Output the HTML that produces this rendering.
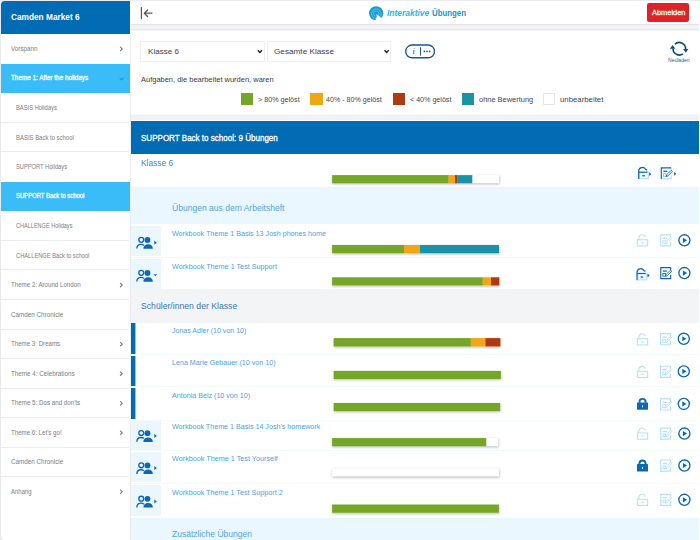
<!DOCTYPE html><html lang="de"><head><meta charset="utf-8"><title>Interaktive Übungen</title><style>

html,body{margin:0;padding:0}
body{width:700px;height:540px;position:relative;overflow:hidden;background:#fff;font-family:"Liberation Sans", sans-serif}
.b{position:absolute;display:block}
.t{position:absolute;white-space:nowrap;line-height:12px;height:12px;transform-origin:0 50%}

</style></head><body>
<svg class="b" width="0" height="0" style="left:0;top:0"><defs><filter id="bl" x="-5%" y="-60%" width="110%" height="220%"><feGaussianBlur stdDeviation="0.95"/></filter></defs></svg>
<div class="b" style="left:0.00px;top:0.00px;width:700.00px;height:1.00px;background:#ebecef;"></div>
<div class="b" style="left:0.00px;top:0.00px;width:6.00px;height:6.00px;background:#e6e7ea;"></div>
<div class="b" style="left:0.00px;top:534.00px;width:6.00px;height:6.00px;background:#e6e7ea;"></div>
<div class="b" style="left:0.00px;top:0.00px;width:1.20px;height:540.00px;background:#e9eaee;"></div>
<div class="b" style="left:1.00px;top:1.00px;width:129.00px;height:539.00px;background:#fff;border-radius:4px 0 0 4px"></div>
<div class="b" style="left:1.00px;top:1.00px;width:128.70px;height:32.70px;background:#016cb3;border-radius:4px 0 0 0"></div>
<div class="b" style="left:129.50px;top:33.70px;width:1.00px;height:506.30px;background:#edeef1;"></div>
<div class="b" style="left:1.00px;top:63.92px;width:128.70px;height:28.92px;background:#39bcf7;"></div>
<div class="b" style="left:1.00px;top:121.86px;width:127.50px;height:1.00px;background:#ededee;"></div>
<div class="b" style="left:1.00px;top:151.38px;width:127.50px;height:1.00px;background:#ededee;"></div>
<div class="b" style="left:1.00px;top:182.00px;width:128.70px;height:28.92px;background:#39bcf7;"></div>
<div class="b" style="left:1.00px;top:239.94px;width:127.50px;height:1.00px;background:#ededee;"></div>
<div class="b" style="left:1.00px;top:269.46px;width:127.50px;height:1.00px;background:#ededee;"></div>
<div class="b" style="left:1.00px;top:298.98px;width:127.50px;height:1.00px;background:#ededee;"></div>
<div class="b" style="left:1.00px;top:328.50px;width:127.50px;height:1.00px;background:#ededee;"></div>
<div class="b" style="left:1.00px;top:358.02px;width:127.50px;height:1.00px;background:#ededee;"></div>
<div class="b" style="left:1.00px;top:387.54px;width:127.50px;height:1.00px;background:#ededee;"></div>
<div class="b" style="left:1.00px;top:417.06px;width:127.50px;height:1.00px;background:#ededee;"></div>
<div class="b" style="left:1.00px;top:446.58px;width:127.50px;height:1.00px;background:#ededee;"></div>
<div class="b" style="left:1.00px;top:476.10px;width:127.50px;height:1.00px;background:#ededee;"></div>
<div class="b" style="left:131.00px;top:24.00px;width:567.70px;height:1.00px;background:#e3e4eb;"></div>
<div class="b" style="left:131.00px;top:25.00px;width:567.70px;height:4.00px;background:#f2f2f7;"></div>
<div class="b" style="left:131.00px;top:29.00px;width:567.70px;height:1.00px;background:#e6e6ed;"></div>
<div class="b" style="left:131.00px;top:30.00px;width:567.70px;height:1.00px;background:#f5f5f9;"></div>
<div class="b" style="left:647.40px;top:3.40px;width:41.70px;height:18.30px;background:#e02228;border-radius:2px"></div>
<div class="b" style="left:131.00px;top:114.00px;width:567.70px;height:1.00px;background:#f8f8fa;"></div>
<div class="b" style="left:131.00px;top:115.00px;width:567.70px;height:5.00px;background:#f1f2f5;"></div>
<div class="b" style="left:140.00px;top:41.00px;width:124.60px;height:21.00px;background:#fff;box-sizing:border-box;border:1px solid #efeff2"></div>
<div class="b" style="left:267.10px;top:41.00px;width:123.70px;height:21.00px;background:#fff;box-sizing:border-box;border:1px solid #efeff2"></div>
<div class="b" style="left:241.00px;top:93.20px;width:12.30px;height:11.60px;background:#76a628;"></div>
<div class="b" style="left:310.30px;top:93.20px;width:12.30px;height:11.60px;background:#f0a716;"></div>
<div class="b" style="left:392.90px;top:93.20px;width:12.30px;height:11.60px;background:#ae3a0d;"></div>
<div class="b" style="left:462.10px;top:93.20px;width:12.30px;height:11.60px;background:#1b93a7;"></div>
<div class="b" style="left:543.10px;top:93.20px;width:12.30px;height:11.60px;background:#fff;box-sizing:border-box;border:1px solid #e4e4e6"></div>
<div class="b" style="left:131.00px;top:121.00px;width:567.70px;height:33.00px;background:#016cb3;"></div>
<div class="b" style="left:131.00px;top:187.00px;width:567.70px;height:1.00px;background:#f0f1f3;"></div>
<div class="b" style="left:131.00px;top:188.00px;width:567.70px;height:36.30px;background:#ebf7fe;"></div>
<div class="b" style="left:131.00px;top:289.00px;width:567.70px;height:34.00px;background:#f3f4f6;"></div>
<div class="b" style="left:131.00px;top:517.60px;width:567.70px;height:22.40px;background:#ebf7fe;"></div>
<div class="b" style="left:131.00px;top:226.10px;width:29.70px;height:30.30px;background:#ebf6fd;"></div>
<div class="b" style="left:131.00px;top:258.60px;width:29.70px;height:30.00px;background:#ebf6fd;"></div>
<div class="b" style="left:131.00px;top:421.10px;width:29.70px;height:28.50px;background:#ebf6fd;"></div>
<div class="b" style="left:131.00px;top:451.60px;width:29.70px;height:30.00px;background:#ebf6fd;"></div>
<div class="b" style="left:131.00px;top:485.10px;width:29.70px;height:30.50px;background:#ebf6fd;"></div>
<div class="b" style="left:131.00px;top:257.10px;width:567.70px;height:1.00px;background:#f3f9fd;"></div>
<div class="b" style="left:131.00px;top:449.90px;width:567.70px;height:1.00px;background:#f3f9fd;"></div>
<div class="b" style="left:131.00px;top:482.60px;width:567.70px;height:1.00px;background:#f3f9fd;"></div>
<div class="b" style="left:131.00px;top:323.10px;width:5.00px;height:30.60px;background:linear-gradient(90deg,#016cb3 4px,rgba(1,108,179,.42) 4px);"></div>
<div class="b" style="left:131.00px;top:355.60px;width:5.00px;height:30.30px;background:linear-gradient(90deg,#016cb3 4px,rgba(1,108,179,.42) 4px);"></div>
<div class="b" style="left:131.00px;top:387.80px;width:5.00px;height:31.40px;background:linear-gradient(90deg,#016cb3 4px,rgba(1,108,179,.42) 4px);"></div>
<div class="b" style="left:131.00px;top:354.20px;width:567.70px;height:1.00px;background:#f3f9fd;"></div>
<div class="b" style="left:131.00px;top:386.40px;width:567.70px;height:1.00px;background:#f3f9fd;"></div>
<div class="b" style="left:131.00px;top:419.80px;width:567.70px;height:1.00px;background:#f3f9fd;"></div>
<svg class="b" style="left:119px;top:45px" width="5" height="7" viewBox="-0.400 -0.960 5.000 7.000"><path d="M0.7 0.9 L2.8 3 L0.7 5.1" fill="none" stroke="#7d8085" stroke-width="1.15"/></svg>
<svg class="b" style="left:118px;top:77px" width="7" height="4" viewBox="-0.900 -0.180 7.000 4.000"><path d="M0.8 0.7 L2.7 2.6 L4.6 0.7" fill="none" stroke="#2a93ce" stroke-width="1.1"/></svg>
<svg class="b" style="left:119px;top:282px" width="5" height="7" viewBox="-0.400 -0.120 5.000 7.000"><path d="M0.7 0.9 L2.8 3 L0.7 5.1" fill="none" stroke="#7d8085" stroke-width="1.15"/></svg>
<svg class="b" style="left:119px;top:341px" width="5" height="7" viewBox="-0.400 -0.160 5.000 7.000"><path d="M0.7 0.9 L2.8 3 L0.7 5.1" fill="none" stroke="#7d8085" stroke-width="1.15"/></svg>
<svg class="b" style="left:119px;top:370px" width="5" height="7" viewBox="-0.400 -0.680 5.000 7.000"><path d="M0.7 0.9 L2.8 3 L0.7 5.1" fill="none" stroke="#7d8085" stroke-width="1.15"/></svg>
<svg class="b" style="left:119px;top:400px" width="5" height="7" viewBox="-0.400 -0.200 5.000 7.000"><path d="M0.7 0.9 L2.8 3 L0.7 5.1" fill="none" stroke="#7d8085" stroke-width="1.15"/></svg>
<svg class="b" style="left:119px;top:429px" width="5" height="7" viewBox="-0.400 -0.720 5.000 7.000"><path d="M0.7 0.9 L2.8 3 L0.7 5.1" fill="none" stroke="#7d8085" stroke-width="1.15"/></svg>
<svg class="b" style="left:119px;top:488px" width="5" height="7" viewBox="-0.400 -0.760 5.000 7.000"><path d="M0.7 0.9 L2.8 3 L0.7 5.1" fill="none" stroke="#7d8085" stroke-width="1.15"/></svg>
<svg class="b" style="left:140px;top:6px" width="14" height="14" viewBox="0.000 -0.500 14.000 14.000"><g fill="none" stroke="#58585a" stroke-width="1.25" stroke-linecap="round" stroke-linejoin="round"><path d="M1.4 1.1V12"/><path d="M4.3 6.7H11.9M7.6 3.5L4.3 6.7L7.6 10"/></g></svg>
<svg class="b" style="left:368px;top:5px" width="16" height="16" viewBox="-0.450 -0.550 16.000 16.000"><circle cx="7.7" cy="7.7" r="7.05" fill="#149ad2"/><g fill="none" stroke="#6ac5ec" stroke-width="0.9"><circle cx="7.8" cy="8.2" r="2.7"/><circle cx="7.8" cy="8.2" r="4.8"/></g><path d="M7.9 8.3 L15.2 14.6 L10 17.4 L6.9 17.4 Z" fill="#fff"/><path d="M7.2 8.2 L8 8 L8.3 11.6 L7 13 Z" fill="#149ad2"/></svg>
<svg class="b" style="left:256px;top:49px" width="7" height="5" viewBox="-0.900 -0.400 7.000 5.000"><path d="M0.9 0.9 L3 3.1 L5.1 0.9" fill="none" stroke="#222" stroke-width="1.4"/></svg>
<svg class="b" style="left:383px;top:49px" width="7" height="5" viewBox="-0.600 -0.400 7.000 5.000"><path d="M0.9 0.9 L3 3.1 L5.1 0.9" fill="none" stroke="#222" stroke-width="1.4"/></svg>
<svg class="b" style="left:404px;top:43px" width="32" height="17" viewBox="-0.400 -0.700 32.000 17.000"><rect x="1.3" y="1.3" width="28.8" height="12.8" rx="6.4" fill="#fff" stroke="#1c568c" stroke-width="1.4"/><path d="M16.1 3.6V12" stroke="#1c568c" stroke-width="1"/><circle cx="20" cy="7.7" r="0.85" fill="#1c568c"/><circle cx="22.6" cy="7.7" r="0.85" fill="#1c568c"/><circle cx="25.2" cy="7.7" r="0.85" fill="#1c568c"/><text x="8" y="10.5" font-family="Liberation Serif, serif" font-style="italic" font-size="8.6" fill="#1c4f80">i</text></svg>
<svg class="b" style="left:669px;top:40px" width="21" height="17" viewBox="0.000 0.000 21.000 17.000"><g fill="none" stroke="#0f4a7e" stroke-width="1.6"><path d="M5.85 4.25A6.3 6.3 0 0 1 16.6 8.9"/><path d="M4.0 8.6A6.3 6.3 0 0 0 14.0 13.8"/></g><path d="M14.1 9.0 L19.3 9.0 L16.9 12.8 Z" fill="#0f4a7e"/><path d="M0.8 8.7 L6.2 8.7 L3.6 5.0 Z" fill="#0f4a7e"/></svg>
<svg class="b" style="left:329px;top:172px" width="174" height="15" viewBox="-0.100 -0.100 174.000 15.000"><rect x="3.3" y="3.9" width="167.00" height="8.20" fill="#28323c" fill-opacity="0.36" filter="url(#bl)"/><rect x="3" y="3" width="167.00" height="8.20" fill="#fff"/><rect x="3.00" y="3" width="116.70" height="8.20" fill="#76a628"/><rect x="119.40" y="3" width="6.80" height="8.20" fill="#f0a716"/><rect x="125.90" y="3" width="2.50" height="8.20" fill="#ae3a0d"/><rect x="128.10" y="3" width="15.10" height="8.20" fill="#1b93a7"/></svg>
<svg class="b" style="left:636px;top:166px" width="16" height="15" viewBox="-7.000 -7.300 16.000 15.000"><rect x="-3.4" y="-1.25" width="8.8" height="6.5" fill="#f4fbff" stroke="#b4e1fb" stroke-width="1.1"/><g fill="none" stroke="#0a69b2" stroke-width="1.2"><path d="M-4.3 5.7V-2A3.7 3.7 0 0 1 2.6 -4L4.1 -3.2"/><path d="M-4.3 -1.1H4.4"/><path d="M-0.7 2.45H1.9" stroke-width="1.3"/></g><path d="M6.2 -1 L8.4 0.9 L6.2 2.8 Z" fill="#0a69b2"/></svg>
<svg class="b" style="left:660px;top:167px" width="17" height="13" viewBox="-0.500 0.000 17.000 13.000"><g fill="none" stroke="#0a69b2" stroke-width="1.15"><path d="M10.7 0.8V3.2M10.7 8.2V11.9H0.8" stroke="#b4e1fb"/><path d="M0.8 11.9V0.8H10.7" stroke="#0a69b2"/><path d="M2.9 4.3H6.9" stroke-width="1.3"/><rect x="2.9" y="6.7" width="2.6" height="2.6" stroke-width="0.9" stroke="#7fc4f0"/><path d="M5.6 9.6L6.4 7.6L10.6 3.3L11.8 4.4L7.6 8.8Z" stroke-width="0.9" fill="#fff"/></g><path d="M13.6 4.9 L15.8 6.8 L13.6 8.7 Z" fill="#0a69b2"/></svg>
<svg class="b" style="left:136px;top:236px" width="23" height="13" viewBox="-0.100 -0.700 23.000 13.000"><g fill="none" stroke="#0a69b2" stroke-width="1.35"><circle cx="5.15" cy="3.15" r="2.45"/><path d="M0.75 11.9C0.8 9.1 2.5 7.6 4.9 7.6C6 7.6 7 7.9 7.8 8.7"/></g><circle cx="11.4" cy="3.3" r="2.9" fill="#0a69b2"/><path d="M7.3 12C7.3 9.2 9 7.5 12 7.5C15 7.5 16.7 9.2 16.7 12Z" fill="#0a69b2"/><path d="M18.2 3.9 L20.7 6 L18.2 8.1 Z" fill="#0a69b2"/></svg>
<svg class="b" style="left:329px;top:242px" width="174" height="15" viewBox="-0.100 0.000 174.000 15.000"><rect x="3.3" y="3.9" width="166.90" height="8.20" fill="#28323c" fill-opacity="0.36" filter="url(#bl)"/><rect x="3" y="3" width="166.90" height="8.20" fill="#fff"/><rect x="3.00" y="3" width="72.20" height="8.20" fill="#76a628"/><rect x="74.90" y="3" width="16.30" height="8.20" fill="#f0a716"/><rect x="90.90" y="3" width="79.00" height="8.20" fill="#1b93a7"/></svg>
<svg class="b" style="left:635px;top:233px" width="15" height="15" viewBox="-7.500 -7.350 15.000 15.000"><g fill="none" stroke="#b4e1fb" stroke-width="1.1"><rect x="-5.15" y="-0.6" width="10.3" height="6.2"/><path d="M-3.75 -0.6V-2.15A3.45 3.45 0 0 1 2.94 -3.35"/><path d="M-1.2 2.5H1.2" stroke-width="1.2"/></g></svg>
<svg class="b" style="left:659px;top:234px" width="17" height="13" viewBox="-0.950 0.000 17.000 13.000"><g fill="none" stroke="#b4e1fb" stroke-width="1.15"><path d="M10.7 8.2V11.9H0.8V0.8H10.7V3.2" stroke="#b4e1fb"/><path d="M2.9 4.3H6.9" stroke-width="1.3"/><rect x="2.9" y="6.7" width="2.6" height="2.6" stroke-width="0.9" stroke="#b4e1fb"/><path d="M5.6 9.6L6.4 7.6L10.6 3.3L11.8 4.4L7.6 8.8Z" stroke-width="0.9" fill="#fff"/></g></svg>
<svg class="b" style="left:677px;top:233px" width="14" height="14" viewBox="-0.800 -0.700 14.000 14.000"><circle cx="6.6" cy="6.6" r="5.55" fill="#fff" stroke="#0a69b2" stroke-width="1.35"/><path d="M5.1 4 L9.3 6.6 L5.1 9.2 Z" fill="#0a69b2"/></svg>
<svg class="b" style="left:136px;top:269px" width="23" height="13" viewBox="-0.100 -0.700 23.000 13.000"><g fill="none" stroke="#0a69b2" stroke-width="1.35"><circle cx="5.15" cy="3.15" r="2.45"/><path d="M0.75 11.9C0.8 9.1 2.5 7.6 4.9 7.6C6 7.6 7 7.9 7.8 8.7"/></g><circle cx="11.4" cy="3.3" r="2.9" fill="#0a69b2"/><path d="M7.3 12C7.3 9.2 9 7.5 12 7.5C15 7.5 16.7 9.2 16.7 12Z" fill="#0a69b2"/><path d="M17.6 4.6 L21 4.6 L19.3 6.5 Z" fill="#0a69b2"/></svg>
<svg class="b" style="left:329px;top:274px" width="174" height="15" viewBox="-0.100 -0.300 174.000 15.000"><rect x="3.3" y="3.9" width="167.20" height="8.20" fill="#28323c" fill-opacity="0.36" filter="url(#bl)"/><rect x="3" y="3" width="167.20" height="8.20" fill="#fff"/><rect x="3.00" y="3" width="150.80" height="8.20" fill="#76a628"/><rect x="153.50" y="3" width="8.70" height="8.20" fill="#f0a716"/><rect x="161.90" y="3" width="8.30" height="8.20" fill="#ae3a0d"/></svg>
<svg class="b" style="left:634px;top:267px" width="17" height="15" viewBox="-7.300 -7.600 17.000 15.000"><rect x="-3.4" y="-1.25" width="8.8" height="6.5" fill="#f4fbff" stroke="#b4e1fb" stroke-width="1.1"/><g fill="none" stroke="#0a69b2" stroke-width="1.2"><path d="M-4.3 5.7V-2A3.7 3.7 0 0 1 2.6 -4L4.1 -3.2"/><path d="M-4.3 -1.1H4.4"/><path d="M-0.7 2.45H1.9" stroke-width="1.3"/></g><path d="M6.2 -1 L8.4 0.9 L6.2 2.8 Z" fill="#0a69b2"/></svg>
<svg class="b" style="left:659px;top:266px" width="17" height="14" viewBox="-0.950 -0.750 17.000 14.000"><g fill="none" stroke="#0a69b2" stroke-width="1.15"><path d="M10.7 8.2V11.9H0.8V0.8H10.7V3.2" stroke="#0a69b2"/><path d="M2.9 4.3H6.9" stroke-width="1.3"/><rect x="2.9" y="6.7" width="2.6" height="2.6" stroke-width="0.9" stroke="#0a69b2"/><path d="M5.6 9.6L6.4 7.6L10.6 3.3L11.8 4.4L7.6 8.8Z" stroke-width="0.9" fill="#fff"/></g></svg>
<svg class="b" style="left:677px;top:266px" width="14" height="14" viewBox="-0.800 -0.450 14.000 14.000"><circle cx="6.6" cy="6.6" r="5.55" fill="#fff" stroke="#0a69b2" stroke-width="1.35"/><path d="M5.1 4 L9.3 6.6 L5.1 9.2 Z" fill="#0a69b2"/></svg>
<svg class="b" style="left:136px;top:429px" width="23" height="14" viewBox="-0.100 -0.900 23.000 14.000"><g fill="none" stroke="#0a69b2" stroke-width="1.35"><circle cx="5.15" cy="3.15" r="2.45"/><path d="M0.75 11.9C0.8 9.1 2.5 7.6 4.9 7.6C6 7.6 7 7.9 7.8 8.7"/></g><circle cx="11.4" cy="3.3" r="2.9" fill="#0a69b2"/><path d="M7.3 12C7.3 9.2 9 7.5 12 7.5C15 7.5 16.7 9.2 16.7 12Z" fill="#0a69b2"/><path d="M18.2 3.9 L20.7 6 L18.2 8.1 Z" fill="#0a69b2"/></svg>
<svg class="b" style="left:329px;top:435px" width="173" height="15" viewBox="-0.100 -0.050 173.000 15.000"><rect x="3.3" y="3.9" width="166.00" height="8.25" fill="#28323c" fill-opacity="0.36" filter="url(#bl)"/><rect x="3" y="3" width="166.00" height="8.25" fill="#fff"/><rect x="3.00" y="3" width="154.20" height="8.25" fill="#76a628"/></svg>
<svg class="b" style="left:635px;top:426px" width="15" height="15" viewBox="-7.500 -7.600 15.000 15.000"><g fill="none" stroke="#b4e1fb" stroke-width="1.1"><rect x="-5.15" y="-0.6" width="10.3" height="6.2"/><path d="M-3.75 -0.6V-2.15A3.45 3.45 0 0 1 2.94 -3.35"/><path d="M-1.2 2.5H1.2" stroke-width="1.2"/></g></svg>
<svg class="b" style="left:659px;top:427px" width="17" height="13" viewBox="-0.950 -0.250 17.000 13.000"><g fill="none" stroke="#b4e1fb" stroke-width="1.15"><path d="M10.7 8.2V11.9H0.8V0.8H10.7V3.2" stroke="#b4e1fb"/><path d="M2.9 4.3H6.9" stroke-width="1.3"/><rect x="2.9" y="6.7" width="2.6" height="2.6" stroke-width="0.9" stroke="#b4e1fb"/><path d="M5.6 9.6L6.4 7.6L10.6 3.3L11.8 4.4L7.6 8.8Z" stroke-width="0.9" fill="#fff"/></g></svg>
<svg class="b" style="left:677px;top:426px" width="14" height="15" viewBox="-0.800 -0.950 14.000 15.000"><circle cx="6.6" cy="6.6" r="5.55" fill="#fff" stroke="#0a69b2" stroke-width="1.35"/><path d="M5.1 4 L9.3 6.6 L5.1 9.2 Z" fill="#0a69b2"/></svg>
<svg class="b" style="left:136px;top:462px" width="23" height="13" viewBox="-0.100 -0.100 23.000 13.000"><g fill="none" stroke="#0a69b2" stroke-width="1.35"><circle cx="5.15" cy="3.15" r="2.45"/><path d="M0.75 11.9C0.8 9.1 2.5 7.6 4.9 7.6C6 7.6 7 7.9 7.8 8.7"/></g><circle cx="11.4" cy="3.3" r="2.9" fill="#0a69b2"/><path d="M7.3 12C7.3 9.2 9 7.5 12 7.5C15 7.5 16.7 9.2 16.7 12Z" fill="#0a69b2"/><path d="M18.2 3.9 L20.7 6 L18.2 8.1 Z" fill="#0a69b2"/></svg>
<svg class="b" style="left:329px;top:465px" width="174" height="15" viewBox="-0.100 -0.300 174.000 15.000"><rect x="3.3" y="3.9" width="167.00" height="8.20" fill="#28323c" fill-opacity="0.36" filter="url(#bl)"/><rect x="3" y="3" width="167.00" height="8.20" fill="#fff"/></svg>
<svg class="b" style="left:635px;top:458px" width="15" height="15" viewBox="-7.500 -7.950 15.000 15.000"><rect x="-5.5" y="-1.9" width="11" height="7.4" rx="0.5" fill="#0a69b2"/><path d="M-3.05 -1.5V-2.4A3.05 3.05 0 0 1 3.05 -2.4V-1.5" fill="none" stroke="#0a69b2" stroke-width="1.9"/><rect x="-0.5" y="0.8" width="1" height="2.3" rx="0.5" fill="#fff"/></svg>
<svg class="b" style="left:659px;top:459px" width="17" height="13" viewBox="-0.950 -0.200 17.000 13.000"><g fill="none" stroke="#b4e1fb" stroke-width="1.15"><path d="M10.7 8.2V11.9H0.8V0.8H10.7V3.2" stroke="#b4e1fb"/><path d="M2.9 4.3H6.9" stroke-width="1.3"/><rect x="2.9" y="6.7" width="2.6" height="2.6" stroke-width="0.9" stroke="#b4e1fb"/><path d="M5.6 9.6L6.4 7.6L10.6 3.3L11.8 4.4L7.6 8.8Z" stroke-width="0.9" fill="#fff"/></g></svg>
<svg class="b" style="left:677px;top:458px" width="14" height="15" viewBox="-0.800 -0.900 14.000 15.000"><circle cx="6.6" cy="6.6" r="5.55" fill="#fff" stroke="#0a69b2" stroke-width="1.35"/><path d="M5.1 4 L9.3 6.6 L5.1 9.2 Z" fill="#0a69b2"/></svg>
<svg class="b" style="left:136px;top:495px" width="23" height="13" viewBox="-0.100 -0.500 23.000 13.000"><g fill="none" stroke="#0a69b2" stroke-width="1.35"><circle cx="5.15" cy="3.15" r="2.45"/><path d="M0.75 11.9C0.8 9.1 2.5 7.6 4.9 7.6C6 7.6 7 7.9 7.8 8.7"/></g><circle cx="11.4" cy="3.3" r="2.9" fill="#0a69b2"/><path d="M7.3 12C7.3 9.2 9 7.5 12 7.5C15 7.5 16.7 9.2 16.7 12Z" fill="#0a69b2"/><path d="M18.2 3.9 L20.7 6 L18.2 8.1 Z" fill="#0a69b2"/></svg>
<svg class="b" style="left:329px;top:501px" width="173" height="15" viewBox="-0.100 -0.550 173.000 15.000"><rect x="3.3" y="3.9" width="166.80" height="8.25" fill="#28323c" fill-opacity="0.36" filter="url(#bl)"/><rect x="3" y="3" width="166.80" height="8.25" fill="#fff"/><rect x="3.00" y="3" width="166.80" height="8.25" fill="#76a628"/></svg>
<svg class="b" style="left:635px;top:492px" width="15" height="15" viewBox="-7.500 -7.850 15.000 15.000"><g fill="none" stroke="#b4e1fb" stroke-width="1.1"><rect x="-5.15" y="-0.6" width="10.3" height="6.2"/><path d="M-3.75 -0.6V-2.15A3.45 3.45 0 0 1 2.94 -3.35"/><path d="M-1.2 2.5H1.2" stroke-width="1.2"/></g></svg>
<svg class="b" style="left:659px;top:493px" width="17" height="14" viewBox="-0.950 -0.500 17.000 14.000"><g fill="none" stroke="#b4e1fb" stroke-width="1.15"><path d="M10.7 8.2V11.9H0.8V0.8H10.7V3.2" stroke="#b4e1fb"/><path d="M2.9 4.3H6.9" stroke-width="1.3"/><rect x="2.9" y="6.7" width="2.6" height="2.6" stroke-width="0.9" stroke="#b4e1fb"/><path d="M5.6 9.6L6.4 7.6L10.6 3.3L11.8 4.4L7.6 8.8Z" stroke-width="0.9" fill="#fff"/></g></svg>
<svg class="b" style="left:677px;top:493px" width="14" height="14" viewBox="-0.800 -0.200 14.000 14.000"><circle cx="6.6" cy="6.6" r="5.55" fill="#fff" stroke="#0a69b2" stroke-width="1.35"/><path d="M5.1 4 L9.3 6.6 L5.1 9.2 Z" fill="#0a69b2"/></svg>
<svg class="b" style="left:330px;top:335px" width="174" height="15" viewBox="-0.700 -0.100 174.000 15.000"><rect x="3.3" y="3.9" width="166.70" height="8.40" fill="#28323c" fill-opacity="0.36" filter="url(#bl)"/><rect x="3" y="3" width="166.70" height="8.40" fill="#fff"/><rect x="3.00" y="3" width="137.30" height="8.40" fill="#76a628"/><rect x="140.00" y="3" width="15.00" height="8.40" fill="#f0a716"/><rect x="154.70" y="3" width="15.00" height="8.40" fill="#ae3a0d"/></svg>
<svg class="b" style="left:635px;top:332px" width="15" height="15" viewBox="-7.500 -7.350 15.000 15.000"><g fill="none" stroke="#b4e1fb" stroke-width="1.1"><rect x="-5.15" y="-0.6" width="10.3" height="6.2"/><path d="M-3.75 -0.6V-2.15A3.45 3.45 0 0 1 2.94 -3.35"/><path d="M-1.2 2.5H1.2" stroke-width="1.2"/></g></svg>
<svg class="b" style="left:659px;top:332px" width="17" height="14" viewBox="-0.800 -0.850 17.000 14.000"><g fill="none" stroke="#b4e1fb" stroke-width="1.15"><path d="M10.7 8.2V11.9H0.8V0.8H10.7V3.2" stroke="#b4e1fb"/><path d="M2.9 4.3H6.9" stroke-width="1.3"/><rect x="2.9" y="6.7" width="2.6" height="2.6" stroke-width="0.9" stroke="#b4e1fb"/><path d="M5.6 9.6L6.4 7.6L10.6 3.3L11.8 4.4L7.6 8.8Z" stroke-width="0.9" fill="#fff"/></g></svg>
<svg class="b" style="left:677px;top:332px" width="14" height="14" viewBox="-0.200 -0.150 14.000 14.000"><circle cx="6.6" cy="6.6" r="5.55" fill="#fff" stroke="#0a69b2" stroke-width="1.35"/><path d="M5.1 4 L9.3 6.6 L5.1 9.2 Z" fill="#0a69b2"/></svg>
<svg class="b" style="left:330px;top:367px" width="174" height="15" viewBox="-0.700 -0.900 174.000 15.000"><rect x="3.3" y="3.9" width="167.20" height="8.10" fill="#28323c" fill-opacity="0.36" filter="url(#bl)"/><rect x="3" y="3" width="167.20" height="8.10" fill="#fff"/><rect x="3.00" y="3" width="167.20" height="8.10" fill="#76a628"/></svg>
<svg class="b" style="left:635px;top:364px" width="15" height="15" viewBox="-7.500 -7.950 15.000 15.000"><g fill="none" stroke="#b4e1fb" stroke-width="1.1"><rect x="-5.15" y="-0.6" width="10.3" height="6.2"/><path d="M-3.75 -0.6V-2.15A3.45 3.45 0 0 1 2.94 -3.35"/><path d="M-1.2 2.5H1.2" stroke-width="1.2"/></g></svg>
<svg class="b" style="left:659px;top:365px" width="17" height="14" viewBox="-0.800 -0.450 17.000 14.000"><g fill="none" stroke="#b4e1fb" stroke-width="1.15"><path d="M10.7 8.2V11.9H0.8V0.8H10.7V3.2" stroke="#b4e1fb"/><path d="M2.9 4.3H6.9" stroke-width="1.3"/><rect x="2.9" y="6.7" width="2.6" height="2.6" stroke-width="0.9" stroke="#b4e1fb"/><path d="M5.6 9.6L6.4 7.6L10.6 3.3L11.8 4.4L7.6 8.8Z" stroke-width="0.9" fill="#fff"/></g></svg>
<svg class="b" style="left:677px;top:364px" width="14" height="14" viewBox="-0.200 -0.750 14.000 14.000"><circle cx="6.6" cy="6.6" r="5.55" fill="#fff" stroke="#0a69b2" stroke-width="1.35"/><path d="M5.1 4 L9.3 6.6 L5.1 9.2 Z" fill="#0a69b2"/></svg>
<svg class="b" style="left:330px;top:400px" width="174" height="15" viewBox="-0.700 0.000 174.000 15.000"><rect x="3.3" y="3.9" width="166.40" height="8.10" fill="#28323c" fill-opacity="0.36" filter="url(#bl)"/><rect x="3" y="3" width="166.40" height="8.10" fill="#fff"/><rect x="3.00" y="3" width="166.40" height="8.10" fill="#76a628"/></svg>
<svg class="b" style="left:635px;top:397px" width="15" height="15" viewBox="-7.500 -7.300 15.000 15.000"><rect x="-5.5" y="-1.9" width="11" height="7.4" rx="0.5" fill="#0a69b2"/><path d="M-3.05 -1.5V-2.4A3.05 3.05 0 0 1 3.05 -2.4V-1.5" fill="none" stroke="#0a69b2" stroke-width="1.9"/><rect x="-0.5" y="0.8" width="1" height="2.3" rx="0.5" fill="#fff"/></svg>
<svg class="b" style="left:659px;top:398px" width="17" height="13" viewBox="-0.800 -0.050 17.000 13.000"><g fill="none" stroke="#b4e1fb" stroke-width="1.15"><path d="M10.7 8.2V11.9H0.8V0.8H10.7V3.2" stroke="#b4e1fb"/><path d="M2.9 4.3H6.9" stroke-width="1.3"/><rect x="2.9" y="6.7" width="2.6" height="2.6" stroke-width="0.9" stroke="#b4e1fb"/><path d="M5.6 9.6L6.4 7.6L10.6 3.3L11.8 4.4L7.6 8.8Z" stroke-width="0.9" fill="#fff"/></g></svg>
<svg class="b" style="left:677px;top:397px" width="14" height="14" viewBox="-0.200 -0.350 14.000 14.000"><circle cx="6.6" cy="6.6" r="5.55" fill="#fff" stroke="#0a69b2" stroke-width="1.35"/><path d="M5.1 4 L9.3 6.6 L5.1 9.2 Z" fill="#0a69b2"/></svg>
<div class="t" id="t0" style="left:11.40px;top:11px;color:#fff;font-size:9px;font-weight:700;transform:translateY(0.20px) scaleX(0.9204);">Camden Market 6</div>
<div class="t" id="t1" style="left:11.40px;top:42px;color:#7b7e84;font-size:6.7px;transform:translateY(1.06px) scaleX(0.9375);">Vorspann</div>
<div class="t" id="t2" style="left:11.40px;top:71px;color:#fff;font-size:6.6px;-webkit-text-stroke:0.28px #fff;transform:translateY(0.98px) scaleX(0.9616);">Theme 1: After the holidays</div>
<div class="t" id="t3" style="left:15.60px;top:101px;color:#7b7e84;font-size:6.6px;transform:translateY(1.10px) scaleX(0.8765);">BASIS Holidays</div>
<div class="t" id="t4" style="left:15.60px;top:131px;color:#7b7e84;font-size:6.6px;transform:translateY(0.62px) scaleX(0.9011);">BASIS Back to school</div>
<div class="t" id="t5" style="left:15.60px;top:160px;color:#7b7e84;font-size:6.6px;transform:translateY(1.14px) scaleX(0.8679);">SUPPORT Holidays</div>
<div class="t" id="t6" style="left:15.60px;top:189px;color:#fff;font-size:6.6px;-webkit-text-stroke:0.28px #fff;transform:translateY(1.06px) scaleX(0.8958);">SUPPORT Back to school</div>
<div class="t" id="t7" style="left:15.60px;top:219px;color:#7b7e84;font-size:6.6px;transform:translateY(1.18px) scaleX(0.8410);">CHALLENGE Holidays</div>
<div class="t" id="t8" style="left:15.60px;top:249px;color:#7b7e84;font-size:6.6px;transform:translateY(0.70px) scaleX(0.8669);">CHALLENGE Back to school</div>
<div class="t" id="t9" style="left:11.40px;top:278px;color:#7b7e84;font-size:6.7px;transform:translateY(1.22px) scaleX(0.9220);">Theme 2: Around London</div>
<div class="t" id="t10" style="left:11.40px;top:308px;color:#7b7e84;font-size:6.7px;transform:translateY(0.74px) scaleX(0.9424);">Camden Chronicle</div>
<div class="t" id="t11" style="left:11.40px;top:337px;color:#7b7e84;font-size:6.7px;transform:translateY(1.26px) scaleX(0.9191);">Theme 3: Dreams</div>
<div class="t" id="t12" style="left:11.40px;top:367px;color:#7b7e84;font-size:6.7px;transform:translateY(0.78px) scaleX(0.9400);">Theme 4: Celebrations</div>
<div class="t" id="t13" style="left:11.40px;top:396px;color:#7b7e84;font-size:6.7px;transform:translateY(1.30px) scaleX(0.9287);">Theme 5: Dos and don&#39;ts</div>
<div class="t" id="t14" style="left:11.40px;top:426px;color:#7b7e84;font-size:6.7px;transform:translateY(0.82px) scaleX(0.9169);">Theme 6: Let&#39;s go!</div>
<div class="t" id="t15" style="left:11.40px;top:455px;color:#7b7e84;font-size:6.7px;transform:translateY(1.34px) scaleX(0.9424);">Camden Chronicle</div>
<div class="t" id="t16" style="left:11.40px;top:485px;color:#7b7e84;font-size:6.7px;transform:translateY(0.86px) scaleX(0.8932);">Anhang</div>
<div class="t" id="t17" style="left:386.80px;top:6px;color:#1fb7ef;font-size:9.9px;font-weight:700;font-style:italic;transform:translateY(0.70px) scaleX(0.8541);">Interaktive</div>
<div class="t" id="t18" style="left:432.00px;top:6px;color:#2195c9;font-size:9.9px;font-weight:700;transform:translateY(0.70px) scaleX(0.7945);">Übungen</div>
<div class="t" id="t19" style="left:651.60px;top:6px;color:#fff;font-size:7.8px;-webkit-text-stroke:0.28px #fff;transform:translateY(0.60px) scaleX(0.9513);">Abmelden</div>
<div class="t" id="t20" style="left:147.60px;top:45px;color:#3b3e50;font-size:8.1px;transform:translateY(0.80px) scaleX(1.0017);">Klasse 6</div>
<div class="t" id="t21" style="left:274.00px;top:45px;color:#3b3e50;font-size:8.1px;transform:translateY(0.80px) scaleX(1.0103);">Gesamte Klasse</div>
<div class="t" id="t22" style="left:668.20px;top:54px;color:#2a5d8e;font-size:5.6px;transform:translateY(0.20px) scaleX(0.9018);">Neuladen</div>
<div class="t" id="t23" style="left:141.00px;top:73px;color:#3a3a3c;font-size:7.4px;transform:translateY(0.70px) scaleX(1.0116);">Aufgaben, die bearbeitet wurden, waren</div>
<div class="t" id="t24" style="left:257.90px;top:93px;color:#47474a;font-size:7.0px;transform:translateY(0.50px) scaleX(1.0253);">&gt; 80% gelöst</div>
<div class="t" id="t25" style="left:326.40px;top:93px;color:#47474a;font-size:7.0px;transform:translateY(0.50px) scaleX(1.0150);">40% - 80% gelöst</div>
<div class="t" id="t26" style="left:410.00px;top:93px;color:#47474a;font-size:7.0px;transform:translateY(0.50px) scaleX(1.0179);">&lt; 40% gelöst</div>
<div class="t" id="t27" style="left:478.90px;top:93px;color:#47474a;font-size:7.0px;transform:translateY(0.50px) scaleX(1.0631);">ohne Bewertung</div>
<div class="t" id="t28" style="left:560.30px;top:93px;color:#47474a;font-size:7.0px;transform:translateY(0.50px) scaleX(1.1125);">unbearbeitet</div>
<div class="t" id="t29" style="left:140.70px;top:131px;color:#fff;font-size:8.5px;-webkit-text-stroke:0.28px #fff;transform:translateY(0.80px) scaleX(0.9451);">SUPPORT Back to school: 9 Übungen</div>
<div class="t" id="t30" style="left:140.70px;top:156px;color:#4489b6;font-size:8.2px;transform:translateY(1.90px) scaleX(1.0221);">Klasse 6</div>
<div class="t" id="t31" style="left:171.75px;top:201px;color:#52a5e5;font-size:9px;transform:translateY(0.60px) scaleX(0.9487);">Übungen aus dem Arbeitsheft</div>
<div class="t" id="t32" style="left:140.50px;top:300px;color:#3a79b2;font-size:8.7px;transform:translateY(0.20px) scaleX(0.9964);">Schüler/innen der Klasse</div>
<div class="t" id="t33" style="left:171.75px;top:528px;color:#52a5e5;font-size:9px;transform:translateY(0.20px) scaleX(0.9460);">Zusätzliche Übungen</div>
<div class="t" id="t34" style="left:171.75px;top:227px;color:#4d9fe3;font-size:7.5px;transform:translateY(1.20px) scaleX(0.9537);">Workbook Theme 1 Basis 13 Josh phones home</div>
<div class="t" id="t35" style="left:171.75px;top:260px;color:#4d9fe3;font-size:7.5px;transform:translateY(0.70px) scaleX(0.9612);">Workbook Theme 1 Test Support</div>
<div class="t" id="t36" style="left:171.75px;top:420px;color:#4d9fe3;font-size:7.5px;transform:translateY(0.80px) scaleX(0.9515);">Workbook Theme 1 Basis 14 Josh&#39;s homework</div>
<div class="t" id="t37" style="left:171.75px;top:452px;color:#4d9fe3;font-size:7.5px;transform:translateY(0.90px) scaleX(0.9644);">Workbook Theme 1 Test Yourself</div>
<div class="t" id="t38" style="left:171.75px;top:486px;color:#4d9fe3;font-size:7.5px;transform:translateY(1.10px) scaleX(0.9590);">Workbook Theme 1 Test Support 2</div>
<div class="t" id="t39" style="left:171.90px;top:324px;color:#4d9fe3;font-size:7.5px;transform:translateY(0.50px) scaleX(0.9385);">Jonas Adler (10 von 10)</div>
<div class="t" id="t40" style="left:171.90px;top:356px;color:#4d9fe3;font-size:7.5px;transform:translateY(1.10px) scaleX(0.9520);">Lena Marie Gebauer (10 von 10)</div>
<div class="t" id="t41" style="left:171.90px;top:389px;color:#4d9fe3;font-size:7.5px;transform:translateY(0.90px) scaleX(0.9508);">Antonia Belz (10 von 10)</div>
</body></html>
